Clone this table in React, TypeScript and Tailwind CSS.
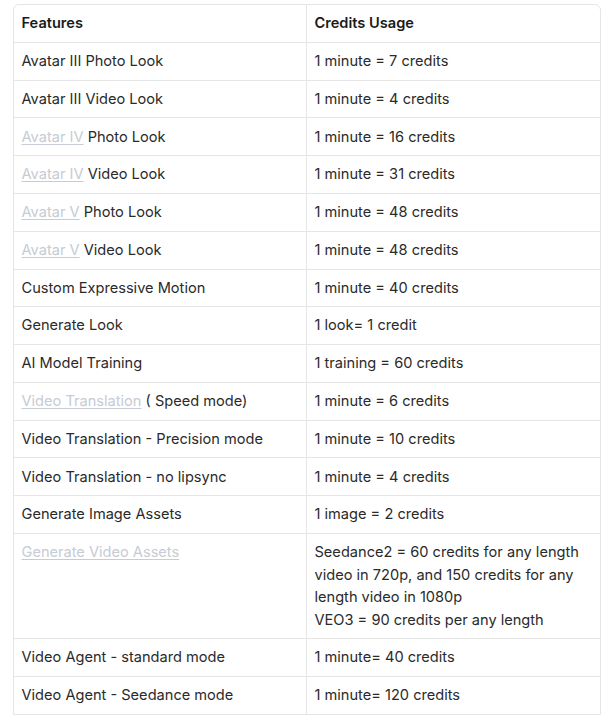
import React from 'react';

type Row = { feature: React.ReactNode; usage: React.ReactNode };

function Ref({ children }: { children: React.ReactNode }) {
  return <span className="text-[#c6cbd4] underline decoration-[#c6cbd4] underline-offset-[1.5px]">{children}</span>;
}

const rows: Row[] = [
  { feature: 'Avatar III Photo Look', usage: '1 minute = 7 credits' },
  { feature: 'Avatar III Video Look', usage: '1 minute = 4 credits' },
  { feature: <><Ref>Avatar IV</Ref> Photo Look</>, usage: '1 minute = 16 credits' },
  { feature: <><Ref>Avatar IV</Ref> Video Look</>, usage: '1 minute = 31 credits' },
  { feature: <><Ref>Avatar V</Ref> Photo Look</>, usage: '1 minute = 48 credits' },
  { feature: <><Ref>Avatar V</Ref> Video Look</>, usage: '1 minute = 48 credits' },
  { feature: 'Custom Expressive Motion', usage: '1 minute = 40 credits' },
  { feature: 'Generate Look', usage: '1 look= 1 credit' },
  { feature: 'AI Model Training', usage: '1 training = 60 credits' },
  { feature: <><Ref>Video Translation</Ref> ( Speed mode)</>, usage: '1 minute = 6 credits' },
  { feature: 'Video Translation - Precision mode', usage: '1 minute = 10 credits' },
  { feature: 'Video Translation - no lipsync', usage: '1 minute = 4 credits' },
  { feature: 'Generate Image Assets', usage: '1 image = 2 credits' },
  {
    feature: <Ref>Generate Video Assets</Ref>,
    usage: (
      <>
        Seedance2 = 60 credits for any length video in 720p, and 150 credits for any length video in 1080p
        <br />
        VEO3 = 90 credits per any length
      </>
    ),
  },
  { feature: 'Video Agent - standard mode', usage: '1 minute= 40 credits' },
  { feature: 'Video Agent - Seedance mode', usage: '1 minute= 120 credits' },
];

export default function App() {
  return (
    <div className="min-h-screen bg-white pt-[4px] pl-[13px] font-['Inter','Liberation_Sans',sans-serif] text-[14.6px] leading-[22.5px] text-[#2a2a2a]">
      <div className="w-[588px] rounded-t-[6px] border border-[#e5e5e5]">
        <div className="grid grid-cols-2 border-b border-[#e5e5e5] font-semibold text-[#1a1a1a]">
          <div className="border-r border-[#e5e5e5] px-[7.5px] py-[7.2px]">Features</div>
          <div className="px-[7.5px] py-[7.2px]">Credits Usage</div>
        </div>
        {rows.map((row, i) => (
          <div key={i} className="grid grid-cols-2 border-b border-[#e5e5e5] last:border-b-0">
            <div className="border-r border-[#e5e5e5] px-[7.5px] py-[7.15px]">{row.feature}</div>
            <div className="px-[7.5px] py-[7.15px]">{row.usage}</div>
          </div>
        ))}
      </div>
    </div>
  );
}
